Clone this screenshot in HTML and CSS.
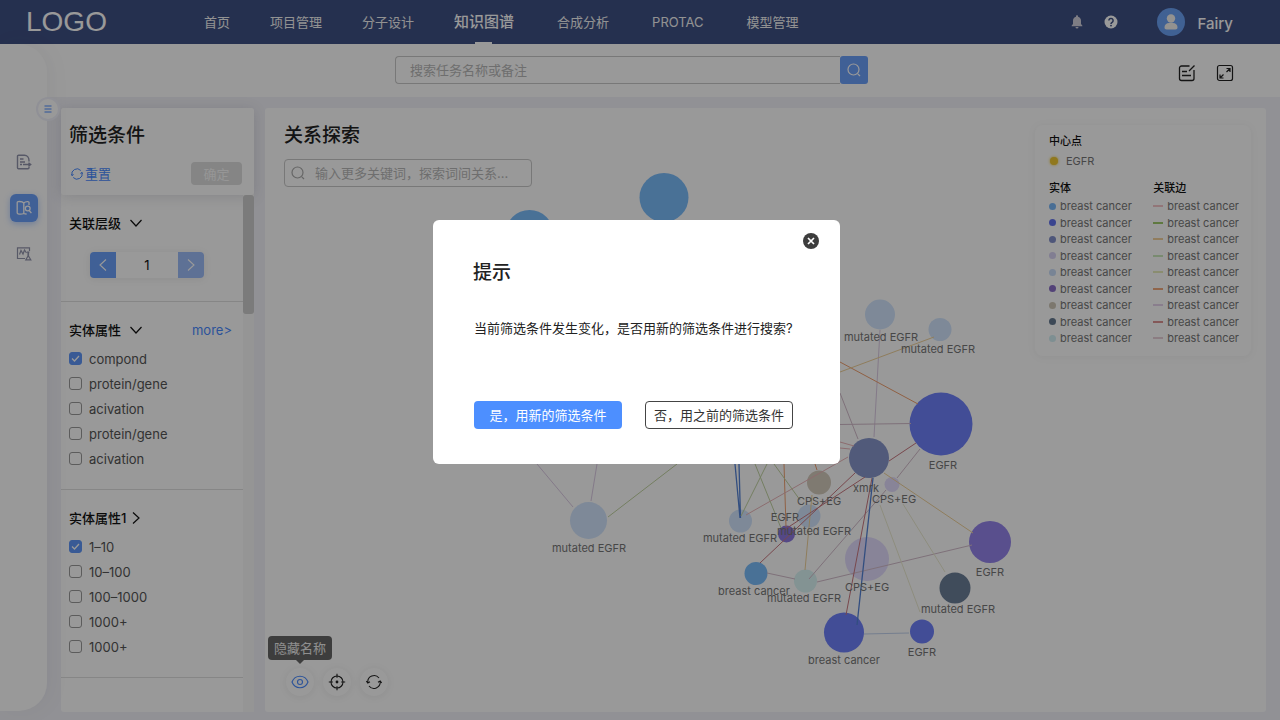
FILE: index.html
```html
<!DOCTYPE html>
<html lang="zh-CN">
<head>
<meta charset="utf-8">
<title>知识图谱</title>
<link rel="stylesheet" href="styles.css">
</head>
<body>
<div class="app">
  <header class="topbar">
    <div class="logo">LOGO</div>
    <nav class="nav">
      <a href="#">首页</a>
      <a href="#">项目管理</a>
      <a href="#">分子设计</a>
      <a href="#" class="active">知识图谱</a>
      <a href="#">合成分析</a>
      <a href="#">PROTAC</a>
      <a href="#">模型管理</a>
    </nav>
    <div class="user">
      <button class="plain" aria-label="通知"><svg width="12" height="14" viewBox="0 0 12 14"><path fill="#d2d0dc" d="M6 0.3c.6 0 1 .4 1 1v.4c1.900.5 3 2 3 4v3.300l1.300 1.500v.8H.7v-.8L2 9V5.700c0-2 1.100-3.500 3-4v-.4c0-.6.4-1 1-1zM4.500 12h3a1.500 1.500 0 0 1-3 0z"/></svg></button>
      <button class="plain" aria-label="帮助"><svg width="14" height="14" viewBox="0 0 14 14"><circle cx="7" cy="7" r="6.500" fill="#fff"/><path d="M4.900 5.500a2.100 2.100 0 1 1 3.200 1.800C7.300 7.800 7 8.100 7 8.900" fill="none" stroke="#3f5084" stroke-width="1.500"/><circle cx="7" cy="10.600" r=".95" fill="#3f5084"/></svg></button>
      <svg class="avatar" width="28" height="28" viewBox="0 0 28 28"><circle cx="14" cy="14" r="14" fill="#6ca2f6"/><circle cx="14" cy="10.500" r="4.200" fill="#f5f3f0"/><path d="M7.500 19.500c0-3 2-4.500 4.500-4.500h4c2.500 0 4.500 1.500 4.500 4.500 0 1.200-.8 2-2 2h-9c-1.200 0-2-.8-2-2z" fill="#f5f3f0"/></svg>
      <span class="username">Fairy</span>
    </div>
  </header>

  <div class="body">
    <aside class="rail">
      <button class="toggle" aria-label="展开菜单"><svg width="8" height="8" viewBox="0 0 8 8"><path d="M.5 1h7M.5 4h7M.5 7h7" stroke="#4a8bff" stroke-width="1"/></svg></button>
      <button class="rail-btn" aria-label="文档"><svg width="16" height="16" viewBox="0 0 16 16" fill="none" stroke="#9294ac" stroke-width="1.400"><path d="M13 7.500V6.500C13 3.500 11 1.200 8.500 1.200h-6a1 1 0 0 0-1 1v11.600a1 1 0 0 0 1 1H12a1 1 0 0 0 1-1v-1M4 5h3.500M4 8h5M4 10.500h2M7 10.500h7.500M12.500 8.700l2.200 1.800-2.200 1.800"/></svg></button>
      <button class="rail-btn on" aria-label="知识图谱"><svg width="16" height="16" viewBox="0 0 16 16" fill="none" stroke="#fff" stroke-width="1.300"><path d="M7.800 3v10.500C6 14.300 3.500 14.300 2 13.800a1 1 0 0 1-.8-1V2.600a1 1 0 0 1 .9-1C4 1.400 6.500 1.500 7.800 3zM7.800 3C9 1.600 10.500 1.500 12 1.600a1 1 0 0 1 1 1V5M7.800 13.500c.9.4 1.900.5 2.800.5"/><circle cx="11.700" cy="8.500" r="2.400"/><path d="m13.200 10.500 2.200 2.700"/></svg></button>
      <button class="rail-btn" aria-label="模型"><svg width="16" height="16" viewBox="0 0 16 16" fill="none" stroke="#9294ac" stroke-width="1.200"><path d="M9 12.500H1.500V1.800h12V5M3.500 8.500l1.500-4 2 3.500 1.500-4 2 3M12 6v4l-2.200 3.800h5L12.500 10V6M11 6h2.500"/></svg></button>
    </aside>

    <div class="main">
      <div class="searchbar">
        <form class="search">
          <input type="text" aria-label="搜索任务" placeholder="搜索任务名称或备注">
          <button type="button" aria-label="搜索"><svg width="14" height="14" viewBox="0 0 14 14" fill="none" stroke="#fff" stroke-width="1.200"><circle cx="6.500" cy="6.500" r="5.500"/><path d="m10.800 10.800 2.200 2.200"/></svg></button>
        </form>
        <div class="tools">
          <button class="plain" aria-label="编辑"><svg width="18" height="18" viewBox="0 0 18 18" fill="none" stroke="#222" stroke-width="1.300"><path d="M11.500 2H3.500a2 2 0 0 0-2 2v10.500a2 2 0 0 0 2 2h10.500a2 2 0 0 0 2-2V6M4 7.500h5M4 11.500h9M11 7l5.500-5.500"/></svg></button>
          <button class="plain" aria-label="全屏"><svg width="18" height="18" viewBox="0 0 18 18" fill="none" stroke="#222" stroke-width="1.200"><rect x="1.500" y="1.500" width="15" height="15" rx="2"/><path d="M10.500 4.500H14V8M14 4.500l-3.500 3.500M4 10.500V14h3.500M4 14l3.500-3.500"/></svg></button>
        </div>
      </div>

      <div class="panels">
        <section class="filters">
          <div class="filters-head">
            <h2>筛选条件</h2>
            <div class="filters-actions">
              <button class="reset"><svg width="12" height="12" viewBox="0 0 12 12" fill="none" stroke="#4a8bff" stroke-width="1"><path d="M1 7.500A5.200 5.200 0 0 1 9.800 2.500M11 4.500A5.200 5.200 0 0 1 2.200 9.500M0 6l1 1.600L2.600 6.500M12 6l-1-1.600L9.400 5.500"/></svg>重置</button>
              <button class="confirm" disabled>确定</button>
            </div>
          </div>
          <div class="filters-body">
            <div class="groups">
              <div class="group level">
                <h3>关联层级 <svg width="12" height="8" viewBox="0 0 12 8"><path d="m.5 1 5.500 6 5.500-6" fill="none" stroke="#111" stroke-width="1.200"/></svg></h3>
                <div class="stepper">
                  <button aria-label="减少"><svg width="8" height="12" viewBox="0 0 8 12"><path d="M7 .5 1 6l6 5.500" fill="none" stroke="#fff" stroke-width="1.100"/></svg></button>
                  <input type="text" value="1" aria-label="关联层级">
                  <button class="next" aria-label="增加"><svg width="8" height="12" viewBox="0 0 8 12"><path d="m1 .5 6 5.500-6 5.500" fill="none" stroke="#fff" stroke-width="1.100"/></svg></button>
                </div>
              </div>
              <div class="group">
                <h3>实体属性 <svg width="12" height="8" viewBox="0 0 12 8"><path d="m.5 1 5.500 6 5.500-6" fill="none" stroke="#111" stroke-width="1.200"/></svg><a class="more" href="#">more&gt;</a></h3>
                <div class="checks">
                  <label><input type="checkbox" checked>compond</label>
                  <label><input type="checkbox">protein/gene</label>
                  <label><input type="checkbox">acivation</label>
                  <label><input type="checkbox">protein/gene</label>
                  <label><input type="checkbox">acivation</label>
                </div>
              </div>
              <div class="group">
                <h3 class="tight">实体属性1 <svg width="8" height="12" viewBox="0 0 8 12"><path d="m1 .5 6 5.500-6 5.500" fill="none" stroke="#111" stroke-width="1.200"/></svg></h3>
                <div class="checks">
                  <label><input type="checkbox" checked>1–10</label>
                  <label><input type="checkbox">10–100</label>
                  <label><input type="checkbox">100–1000</label>
                  <label><input type="checkbox">1000+</label>
                  <label><input type="checkbox">1000+</label>
                </div>
              </div>
            </div>
            <div class="track"><div class="thumb"></div></div>
          </div>
        </section>

        <section class="graph">
          <svg class="canvas" viewBox="265 108 1001 604" preserveAspectRatio="xMinYMin meet" role="img" aria-label="关系图">
            <g>
              <circle cx="664" cy="197.500" r="24.500" fill="#7bbcfb"/>
              <circle cx="529.500" cy="234" r="24" fill="#7bbcfb"/>
              <circle cx="880" cy="314.500" r="15" fill="#d2e5fd"/>
              <circle cx="940" cy="329.500" r="11.500" fill="#d2e5fd"/>
              <circle cx="941" cy="424" r="31.500" fill="#6e80fb"/>
              <circle cx="869" cy="458" r="20" fill="#8796cb"/>
              <circle cx="892" cy="484.500" r="7.500" fill="#e3dcfd"/>
              <circle cx="819" cy="482.500" r="12" fill="#d4cbbc"/>
              <circle cx="809" cy="516" r="11.500" fill="#d2e5fd"/>
              <circle cx="786.500" cy="534" r="8.500" fill="#8d78e0"/>
              <circle cx="740.500" cy="521" r="11.500" fill="#d2e5fd"/>
              <circle cx="588.500" cy="520.500" r="18.500" fill="#d2e5fd"/>
              <circle cx="756" cy="573.500" r="11.500" fill="#7bbcfb"/>
              <circle cx="805.500" cy="581" r="11.500" fill="#daf6f6"/>
              <circle cx="867" cy="559" r="22" fill="#e3dcfd"/>
              <circle cx="990" cy="542" r="21" fill="#9484ec"/>
              <circle cx="955" cy="588" r="15.500" fill="#6c7f98"/>
              <circle cx="844" cy="632.500" r="20" fill="#6e80fb"/>
              <circle cx="922" cy="631.500" r="12" fill="#6e80fb"/>
            </g>
            <g class="edges">
              <path stroke="#dccbe4" d="M880 330 874 437M537 464 573 507M597 464 591 501"/>
              <path stroke="#f0a070" d="M840 362 918 404M784 464 786 527M815 464 817 470"/>
              <path stroke="#efd19a" d="M840 372 934 337M884 473 973 533M812 495 805 570"/>
              <path stroke="#d3bccb" d="M840 393 858 439M840 424.500 911 423.500M920 449 897 478M886 490 809 579M767 573 795 579M817 582 972 545"/>
              <path stroke="#eab5b9" d="M840 442 854 446M840 448 850 449M848 457 746 515"/>
              <path stroke="#c97880" d="M916 443 889 461M855 473 760 563M865 477 784 530M872 478 846 615"/>
              <path stroke="#5482d6" stroke-width="1.300" d="M735 464 740 518M739 464 740.500 518M873 478 857 625"/>
              <path stroke="#c2d3a2" d="M767 464 741 516M755 464 781 528M774 464 800 500M677 464 608 517"/>
              <path stroke="#ecebd2" d="M880 505 920 612M903 504 945 572"/>
              <path stroke="#c3d3ee" d="M864 634 909 633"/>
            </g>
            <g class="labels">
              <text x="881" y="341">mutated EGFR</text>
              <text x="938" y="353">mutated EGFR</text>
              <text x="943" y="469">EGFR</text>
              <text x="866" y="492">xmrk</text>
              <text x="894" y="503">CPS+EG</text>
              <text x="819" y="505">CPS+EG</text>
              <text x="785" y="521">EGFR</text>
              <text x="814" y="535">mutated EGFR</text>
              <text x="740" y="542">mutated EGFR</text>
              <text x="589" y="552">mutated EGFR</text>
              <text x="754" y="595">breast cancer</text>
              <text x="804" y="602">mutated EGFR</text>
              <text x="867" y="591">CPS+EG</text>
              <text x="990" y="576">EGFR</text>
              <text x="958" y="613">mutated EGFR</text>
              <text x="844" y="664">breast cancer</text>
              <text x="922" y="656">EGFR</text>
            </g>
          </svg>
          <div class="graph-left">
            <h2>关系探索</h2>
            <label class="explore">
              <svg width="14" height="14" viewBox="0 0 14 14" fill="none" stroke="#aaa" stroke-width="1.200"><circle cx="6.500" cy="6.500" r="5.500"/><path d="m10.800 10.800 2.200 2.200"/></svg>
              <input type="text" aria-label="探索关键词" placeholder="输入更多关键词，探索词间关系...">
            </label>
            <div class="round-tools">
              <div class="with-tip">
                <span class="tip" role="tooltip">隐藏名称</span>
                <button aria-label="隐藏名称"><svg width="18" height="14" viewBox="0 0 18 14" fill="none" stroke="#4a8bff" stroke-width="1.100"><path d="M1 7C4-.6 14-.6 17 7 14 14.600 4 14.600 1 7z"/><circle cx="9" cy="7" r="2.500"/></svg></button>
              </div>
              <button aria-label="定位"><svg width="18" height="18" viewBox="0 0 18 18" fill="none" stroke="#222" stroke-width="1.100"><circle cx="9" cy="9" r="6"/><path d="M9 .8v4M9 13.200v4M.8 9h4M13.200 9h4"/><circle cx="9" cy="9" r="1.400" fill="#222" stroke="none"/></svg></button>
              <button aria-label="刷新"><svg width="16" height="16" viewBox="0 0 16 16" fill="none" stroke="#222" stroke-width="1.100"><path d="M1.800 8.500A6.300 6.300 0 0 1 13 4M14.200 7.500A6.300 6.300 0 0 1 3 12M.3 7l1.500 2L4 7.800M15.700 9l-1.500-2L12 8.200"/></svg></button>
            </div>
          </div>
          <aside class="legend">
            <h4>中心点</h4>
            <p class="center-node"><i></i>EGFR</p>
            <div class="legend-cols">
              <div>
                <h4>实体</h4>
                <ul class="dots">
                  <li class="c1">breast cancer</li><li class="c2">breast cancer</li><li class="c3">breast cancer</li>
                  <li class="c4">breast cancer</li><li class="c5">breast cancer</li><li class="c6">breast cancer</li>
                  <li class="c7">breast cancer</li><li class="c8">breast cancer</li><li class="c9">breast cancer</li>
                </ul>
              </div>
              <div>
                <h4>关联边</h4>
                <ul class="lines">
                  <li class="l1">breast cancer</li><li class="l2">breast cancer</li><li class="l3">breast cancer</li>
                  <li class="l4">breast cancer</li><li class="l5">breast cancer</li><li class="l6">breast cancer</li>
                  <li class="l7">breast cancer</li><li class="l8">breast cancer</li><li class="l9">breast cancer</li>
                </ul>
              </div>
            </div>
          </aside>
        </section>
      </div>
    </div>
  </div>
</div>

<div class="overlay">
  <div class="modal" role="dialog" aria-modal="true" aria-labelledby="modal-title">
    <button class="plain close" aria-label="关闭"><svg width="16" height="16" viewBox="0 0 16 16"><circle cx="8" cy="8" r="8" fill="#3d3d3d"/><path d="m5 5 6 6M11 5l-6 6" stroke="#fff" stroke-width="1.700"/></svg></button>
    <h2 id="modal-title">提示</h2>
    <p>当前筛选条件发生变化，是否用新的筛选条件进行搜索?</p>
    <div class="modal-actions">
      <button class="yes">是，用新的筛选条件</button>
      <button class="no">否，用之前的筛选条件</button>
    </div>
  </div>
</div>
</body>
</html>
```
FILE: styles.css
```css
* { box-sizing: border-box; }
body {
  margin: 0;
  font: 13px/20px Inter, "Noto Sans CJK SC", sans-serif;
  color: #222;
}
h2, h3, h4, p, ul { margin: 0; padding: 0; }
ul { list-style: none; }
svg { display: block; flex: none; }
a { text-decoration: none; }
button, input { font: inherit; }
button { padding: 0; border: 0; cursor: pointer; display: flex; align-items: center; justify-content: center; }
h2 { font-size: 19px; line-height: 28px; font-weight: 500; color: #222; }
.plain { background: none; }

.app { min-height: 100vh; display: flex; flex-direction: column; background: #f2f2f8; }

.topbar { display: flex; align-items: center; height: 44px; padding: 0 47px 0 26px; background: #3f5084; color: #fff; }
.logo { width: 178px; font: 28px/40px "Liberation Sans", sans-serif; }
.nav { display: flex; gap: 40px; height: 44px; }
.nav a { position: relative; line-height: 44px; color: #f4f4f4; }
.nav .active { font-size: 15px; font-weight: 500; color: #fff; }
.nav .active::after { content: ""; position: absolute; left: 50%; bottom: 0; width: 17px; height: 2px; margin-left: -9px; background: #fff; }
.nav .active ~ a { margin-left: 3px; }
.user { display: flex; align-items: center; margin-left: auto; gap: 21px; }
.avatar { margin-left: 18px; }
.username { font-size: 15px; line-height: 24px; font-weight: 500; margin-left: -8px; padding-top: 3px; }

.body { flex: 1; display: flex; }
.rail {
  position: relative;
  width: 47px;
  margin-bottom: 9px;
  padding-top: 104px;
  display: flex;
  flex-direction: column;
  align-items: center;
  gap: 18px;
  background: #fff;
  border-radius: 0 28px 28px 0;
  box-shadow: 4px 0 20px rgba(80, 80, 110, .06);
  z-index: 1;
}
.rail-btn { width: 28px; height: 28px; border-radius: 6px; background: none; }
.rail-btn.on { background: #6ca0fb; box-shadow: 0 2px 6px rgba(74, 139, 255, .4); }
.toggle { position: absolute; right: -11px; top: 55px; width: 20px; height: 20px; border-radius: 50%; background: #fff; box-shadow: 0 0 0 2px #f0f1fa; }

.main { flex: 1; min-width: 0; display: flex; flex-direction: column; }
.searchbar { position: relative; display: flex; justify-content: center; height: 53px; margin-left: -47px; padding: 12px 17px 0 0; background: #fff; }
.search { display: flex; height: 28px; width: 473px; }
.search input { flex: 1; min-width: 0; padding: 0 14px; border: 1px solid #c8c8c8; border-right: 0; border-radius: 4px 0 0 4px; background: #fff; }
input::placeholder { color: #b8b8b8; opacity: 1; }
.search button { width: 28px; border-radius: 3px; background: #6ca0fb; }
.tools { position: absolute; right: 46px; top: 20px; display: flex; gap: 20px; }

.panels { flex: 1; display: flex; gap: 11px; padding: 11px 14px 8px; }
.filters { width: 193px; display: flex; flex-direction: column; background: #fff; border-radius: 3px; }
.filters-head { padding: 14px 12px 10px 8px; background: #fff; border-radius: 3px; box-shadow: 0 2px 14px rgba(60, 60, 90, .16); }
.filters-actions { display: flex; justify-content: space-between; align-items: center; margin-top: 12px; }
.reset { gap: 2px; background: none; color: #4a8bff; height: 22px; padding-left: 2px; }
.confirm { width: 51px; height: 23px; border-radius: 4px; background: #dedede; color: #fafafa; }
.filters-body { flex: 1; display: flex; }
.groups { flex: 1; }
.group { padding: 18px 11px 18px 8px; border-bottom: 1px solid #e0e0e0; }
.group h3 { display: flex; align-items: center; gap: 9px; font-size: 13px; line-height: 20px; font-weight: 500; color: #111; }
.group h3.tight { gap: 6px; }
.more { margin-left: auto; color: #4a8bff; font-weight: 400; }
.level { padding-bottom: 23px; }
.stepper { display: flex; width: 114px; height: 26px; margin: 19px 0 0 21px; border-radius: 4px; overflow: hidden; box-shadow: 0 1px 8px rgba(0, 0, 0, .08); }
.stepper button { width: 26px; background: #6ca0fb; }
.stepper .next { background: #9dbcf8; }
.stepper input { flex: 1; min-width: 0; border: 0; padding: 0; text-align: center; background: #fff; color: #111; }
.checks { margin-top: 6px; }
.checks label { display: flex; align-items: center; gap: 7px; height: 25px; color: #555; }
.checks input { appearance: none; width: 13px; height: 13px; margin: 0; border: 1px solid #999; border-radius: 3px; background: #fff; }
.checks input:checked { border-color: #5f97f8; background: #5f97f8 url("data:image/svg+xml,%3Csvg xmlns='http://www.w3.org/2000/svg' viewBox='0 0 11 11'%3E%3Cpath d='m2 5.500 2.500 2.500L9 3' fill='none' stroke='%23fff' stroke-width='1.300'/%3E%3C/svg%3E"); }
.track { width: 11px; background: #f9f9f9; }
.thumb { height: 119px; border-radius: 3px; background: #cdcdcd; }

.graph { position: relative; flex: 1; min-width: 0; display: flex; justify-content: space-between; align-items: stretch; background: #fff; border-radius: 3px; }
.canvas { position: absolute; left: 0; top: 0; width: 100%; height: 100%; }
.edges { fill: none; stroke-width: 1; }
.labels { font-size: 11px; fill: #777; text-anchor: middle; }
.graph-left { position: relative; display: flex; flex-direction: column; padding: 14px 0 16px 19px; }
.explore { display: flex; align-items: center; gap: 10px; width: 248px; height: 28px; margin-top: 9px; padding-left: 6px; border: 1px solid #c8c8c8; border-radius: 4px; }
.explore input { flex: 1; min-width: 0; border: 0; padding: 0; background: none; }
.round-tools { display: flex; gap: 9px; margin-top: auto; padding-left: 2px; }
.round-tools button { width: 28px; height: 28px; border-radius: 50%; background: #fff; box-shadow: 0 1px 8px rgba(0, 0, 0, .07); }
.with-tip { position: relative; }
.tip { position: absolute; left: -18px; bottom: 36px; width: 64px; line-height: 24px; text-align: center; border-radius: 4px; background: #666; color: #eee; }
.tip::after { content: ""; position: absolute; left: 28px; top: 24px; border: 4px solid transparent; border-top-color: #666; border-bottom: 0; }

.legend { position: relative; align-self: flex-start; width: 216px; margin: 17px 15px 0 0; padding: 8px 12px 10px 14px; border-radius: 8px; background: #fff; box-shadow: 0 1px 10px rgba(0, 0, 0, .05); font-size: 11px; line-height: 16px; color: #777; }
.legend h4 { font-size: 11px; line-height: 16px; font-weight: 500; color: #111; }
.center-node { display: flex; align-items: center; gap: 7px; margin-top: 4px; }
.center-node i { width: 8px; height: 8px; margin: 1px; border-radius: 50%; background: #f0c832; box-shadow: 0 0 3px #f0c832; }
.legend-cols { display: flex; justify-content: space-between; margin-top: 11px; }
.legend ul { display: flex; flex-direction: column; justify-content: space-between; height: 148px; margin-top: 2px; }
.legend li { display: flex; align-items: center; gap: 4px; }
.legend li::before { content: ""; flex: none; background: var(--c); }
.dots li::before { width: 7px; height: 7px; border-radius: 50%; }
.lines li::before { width: 10px; height: 2px; opacity: .8; }
.c1 { --c: #7bb8f8; } .c2 { --c: #6272ee; } .c3 { --c: #8390cb; } .c4 { --c: #d8d2f4; } .c5 { --c: #c8dcf8; }
.c6 { --c: #8a6fc8; } .c7 { --c: #cfc7b8; } .c8 { --c: #647990; } .c9 { --c: #d2eef4; }
.l1 { --c: #f0b6bc; } .l2 { --c: #86bd46; } .l3 { --c: #efc684; } .l4 { --c: #bde2aa; } .l5 { --c: #e0e6aa; }
.l6 { --c: #ee935d; } .l7 { --c: #dec8e6; } .l8 { --c: #d47878; } .l9 { --c: #e2c6d0; }

.overlay { position: fixed; inset: 0; z-index: 10; display: flex; align-items: center; justify-content: center; padding: 0 7px 36px 0; background: rgba(0, 0, 0, .4); }
.modal { position: relative; width: 407px; padding: 39px 40px 35px; border-radius: 6px; background: #fff; }
.modal p { margin: 31px 0 63px 1px; }
.close { position: absolute; right: 21px; top: 13px; }
.modal-actions { display: flex; gap: 23px; padding-left: 1px; }
.modal-actions button { width: 148px; height: 28px; border-radius: 4px; white-space: nowrap; }
.yes { background: #4d8fff; color: #fff; }
.modal-actions .no { border: 1px solid #444; background: #fff; color: #333; }
```
